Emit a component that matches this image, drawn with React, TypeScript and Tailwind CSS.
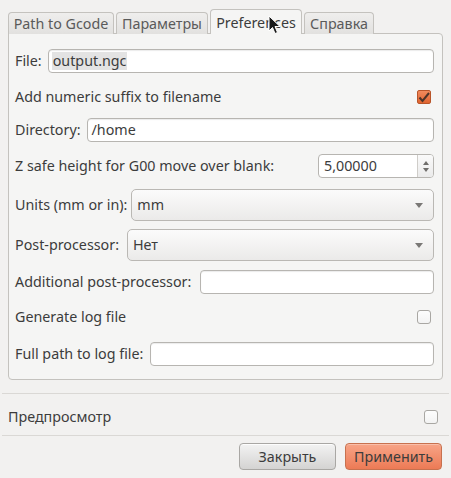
import React from "react";

const font = { fontFamily: '"Noto Sans", "DejaVu Sans", sans-serif' };

function TextInput({ value, className = "", highlight = false }: { value?: string; className?: string; highlight?: boolean }) {
  return (
    <div className={`h-[24px] flex items-center bg-white border border-[#b7b5b1] rounded-[4px] pl-[3px] shadow-[inset_0_1px_1px_rgba(0,0,0,0.08)] ${className}`}>
      {value ? (
        <span className={`leading-[18px] px-[1px] ${highlight ? "bg-[#e3e3e3]" : ""}`}>{value}</span>
      ) : null}
    </div>
  );
}

function Combo({ value, className = "" }: { value: string; className?: string }) {
  return (
    <div className={`h-[32px] flex items-center justify-between rounded-[5px] border border-[#bab8b4] bg-gradient-to-b from-[#fbfbfb] to-[#ebeae9] px-[5px] ${className}`}>
      <span>{value}</span>
      <svg width="8" height="5" viewBox="0 0 8 5" className="mr-[5px]">
        <path d="M0 0 L8 0 L4 5 Z" fill="#7a7876" />
      </svg>
    </div>
  );
}

function Check({ checked = false }: { checked?: boolean }) {
  if (checked) {
    return (
      <div className="w-[14px] h-[14px] rounded-[2px] border border-[#b9552a] bg-gradient-to-b from-[#f08a5d] to-[#e0642f] flex items-center justify-center">
        <svg width="12" height="11" viewBox="0 0 12 11">
          <path d="M1.5 5.5 L4.5 9 L11 1" fill="none" stroke="#4d3429" strokeWidth="2" />
        </svg>
      </div>
    );
  }
  return <div className="w-[14px] h-[14px] rounded-[3px] border border-[#a9a7a3] bg-gradient-to-b from-[#fdfdfd] to-[#f3f3f3]" />;
}

export default function App() {
  return (
    <div className="w-[451px] h-[478px] bg-[#f2f1f0] text-[#3c3c3c] text-[14.3px] relative overflow-hidden" style={font}>
      {/* Tabs */}
      <div className="flex items-end pl-[8px] pt-[10px] h-[34px] gap-[2px] relative z-10">
        <div className="w-[106px] h-[22px] flex items-center justify-center border border-b-0 border-[#c4c2be] rounded-t-[4px] bg-gradient-to-b from-[#efeeed] to-[#e2e1df] text-[#5a5a5a]">Path to Gcode</div>
        <div className="w-[92px] h-[22px] flex items-center justify-center border border-b-0 border-[#c4c2be] rounded-t-[4px] bg-gradient-to-b from-[#efeeed] to-[#e2e1df] text-[#5a5a5a]">Параметры</div>
        <div className="w-[92px] h-[25px] flex items-start pt-[2px] justify-center border border-b-0 border-[#c4c2be] rounded-t-[4px] bg-[#f5f5f4] text-[#3c3c3c]">Preferences</div>
        <div className="w-[70px] h-[22px] flex items-center justify-center border border-b-0 border-[#c4c2be] rounded-t-[4px] bg-gradient-to-b from-[#efeeed] to-[#e2e1df] text-[#5a5a5a]">Справка</div>
      </div>
      {/* Panel */}
      <div className="mx-[8px] -mt-[1px] border border-[#c4c2be] rounded-b-[4px] rounded-tr-[4px] bg-[#f5f5f4] pl-[6px] pr-[8px] pt-[15px] pb-[12px] h-[347px]">
        <div className="flex items-center h-[24px]">
          <span className="mr-[6px]">File:</span>
          <TextInput value="output.ngc" highlight className="flex-1" />
        </div>
        <div className="flex items-center justify-between h-[24px] mt-[12px]">
          <span>Add numeric suffix to filename</span>
          <div className="mr-[3px]"><Check checked /></div>
        </div>
        <div className="flex items-center h-[24px] mt-[9px]">
          <span className="mr-[6px]">Directory:</span>
          <TextInput value="/home" className="flex-1" />
        </div>
        <div className="flex items-center justify-between h-[24px] mt-[12px]">
          <span>Z safe height for G00 move over blank:</span>
          <div className="w-[116px] h-[24px] flex bg-white border border-[#b7b5b1] rounded-[4px] overflow-hidden">
            <div className="flex-1 flex items-center pl-[5px]">5,00000</div>
            <div className="w-[16px] border-l border-[#cfcdc9] bg-gradient-to-b from-[#fafafa] to-[#ebebeb] flex flex-col items-center justify-center gap-[3px]">
              <svg width="6" height="4" viewBox="0 0 6 4"><path d="M0 4 L6 4 L3 0 Z" fill="#6f6d6b" /></svg>
              <svg width="6" height="4" viewBox="0 0 6 4"><path d="M0 0 L6 0 L3 4 Z" fill="#6f6d6b" /></svg>
            </div>
          </div>
        </div>
        <div className="flex items-center h-[32px] mt-[11px]">
          <span className="mr-[4px]">Units (mm or in):</span>
          <Combo value="mm" className="flex-1" />
        </div>
        <div className="flex items-center h-[32px] mt-[8px]">
          <span className="mr-[8px]">Post-processor:</span>
          <Combo value="Нет" className="flex-1" />
        </div>
        <div className="flex items-center h-[24px] mt-[9px]">
          <span className="mr-[9px]">Additional post-processor:</span>
          <TextInput className="flex-1" />
        </div>
        <div className="flex items-center justify-between h-[24px] mt-[11px]">
          <span>Generate log file</span>
          <div className="mr-[3px]"><Check /></div>
        </div>
        <div className="flex items-center h-[24px] mt-[13px]">
          <span className="mr-[7px]">Full path to log file:</span>
          <TextInput className="flex-1" />
        </div>
      </div>
      {/* Separator */}
      <div className="mx-[2px] mt-[13px] h-[1px] bg-[#dad8d5]" />
      <div className="flex items-center justify-between h-[41px] pt-[5px] pl-[8px] pr-[13px]">
        <span>Предпросмотр</span>
        <Check />
      </div>
      <div className="mx-[2px] h-[1px] bg-[#dad8d5]" />
      <div className="flex justify-end gap-[9px] pr-[9px] pt-[7px]">
        <div className="w-[97px] h-[27px] flex items-center justify-center rounded-[4px] border border-[#a9a7a4] bg-gradient-to-b from-[#f3f3f3] to-[#d4d3d2] shadow-[inset_0_1px_0_rgba(255,255,255,0.8)]">Закрыть</div>
        <div className="w-[97px] h-[27px] flex items-center justify-center rounded-[4px] border border-[#c7714f] bg-gradient-to-b from-[#f7a487] to-[#ec7a55] shadow-[inset_0_1px_0_rgba(255,255,255,0.3)]">Применить</div>
      </div>
      {/* mouse cursor */}
      <svg className="absolute left-[268px] top-[15px] z-20" width="13" height="20" viewBox="0 0 13 20">
        <path d="M1 1 L1 16 L4.5 12.5 L7 18.5 L9.5 17.5 L7 11.5 L12 11.5 Z" fill="#1a1a1a" stroke="#ffffff" strokeWidth="1" strokeLinejoin="round" />
      </svg>
    </div>
  );
}
